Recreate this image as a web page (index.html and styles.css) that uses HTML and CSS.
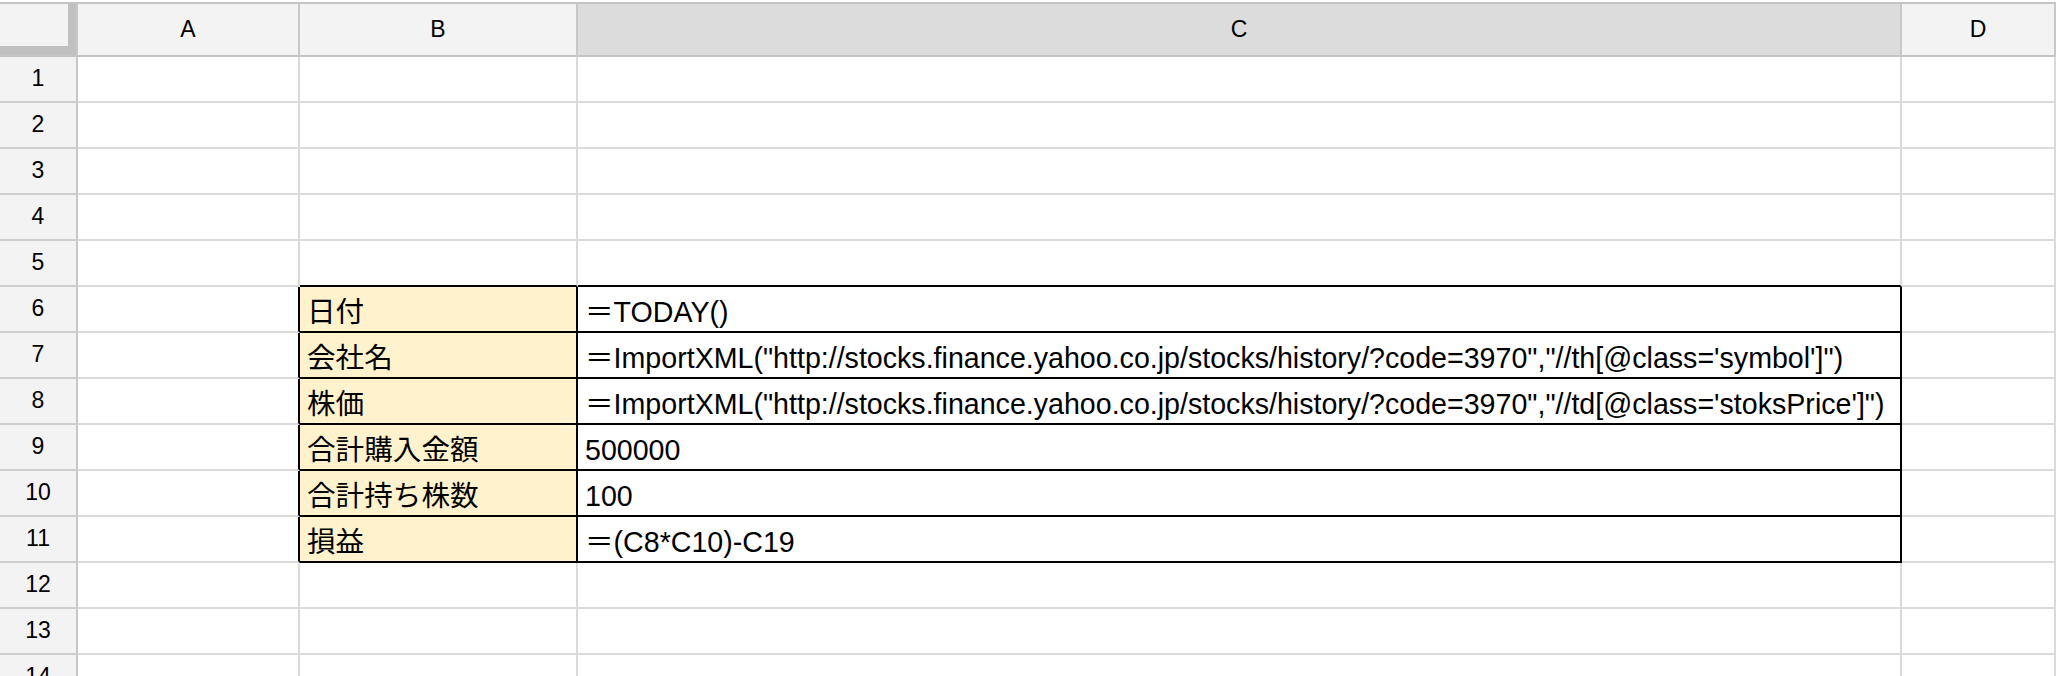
FILE: index.html
```html
<!DOCTYPE html>
<html lang="ja">
<head>
<meta charset="utf-8">
<title>Sheet</title>
<link rel="stylesheet" href="styles.css">
</head>
<body>
<div class="sheet">
  <div class="c h corner"></div>
  <div class="c h">A</div>
  <div class="c h">B</div>
  <div class="c h sel">C</div>
  <div class="c h">D</div>

  <div class="c rh">1</div><div class="c"></div><div class="c"></div><div class="c"></div><div class="c"></div>
  <div class="c rh">2</div><div class="c"></div><div class="c"></div><div class="c"></div><div class="c"></div>
  <div class="c rh">3</div><div class="c"></div><div class="c"></div><div class="c"></div><div class="c"></div>
  <div class="c rh">4</div><div class="c"></div><div class="c"></div><div class="c"></div><div class="c"></div>
  <div class="c rh">5</div><div class="c"></div><div class="c above"></div><div class="c above"></div><div class="c"></div>

  <div class="c rh">6</div><div class="c left"></div><div class="c t lab">日付</div><div class="c t val">＝TODAY()</div><div class="c"></div>
  <div class="c rh">7</div><div class="c left"></div><div class="c t lab">会社名</div><div class="c t val">＝ImportXML("http://stocks.finance.yahoo.co.jp/stocks/history/?code=3970","//th[@class='symbol']")</div><div class="c"></div>
  <div class="c rh">8</div><div class="c left"></div><div class="c t lab">株価</div><div class="c t val">＝ImportXML("http://stocks.finance.yahoo.co.jp/stocks/history/?code=3970","//td[@class='stoksPrice']")</div><div class="c"></div>
  <div class="c rh">9</div><div class="c left"></div><div class="c t lab">合計購入金額</div><div class="c t val">500000</div><div class="c"></div>
  <div class="c rh">10</div><div class="c left"></div><div class="c t lab">合計持ち株数</div><div class="c t val">100</div><div class="c"></div>
  <div class="c rh">11</div><div class="c left"></div><div class="c t lab">損益</div><div class="c t val">＝(C8*C10)-C19</div><div class="c"></div>

  <div class="c rh">12</div><div class="c"></div><div class="c"></div><div class="c"></div><div class="c"></div>
  <div class="c rh">13</div><div class="c"></div><div class="c"></div><div class="c"></div><div class="c"></div>
  <div class="c rh">14</div><div class="c"></div><div class="c"></div><div class="c"></div><div class="c"></div>
</div>
</body>
</html>
```
FILE: styles.css
```css
html, body {
  margin: 0;
  padding: 0;
  background: #ffffff;
  overflow: hidden;
}

body {
  padding-top: 2px;
  font-family: "Liberation Sans", Arial, "Noto Sans CJK JP", sans-serif;
  color: #000;
}

.sheet {
  display: grid;
  grid-template-columns: 78px 222px 278px 1324px 1fr;
  grid-template-rows: 55px;
  grid-auto-rows: 46px;
}

.c {
  box-sizing: border-box;
  border-right: 2px solid #dadada;
  border-bottom: 2px solid #dadada;
  height: 46px;
  overflow: hidden;
  white-space: nowrap;
}

.h {
  height: 55px;
  border-top: 2px solid #c4c4c4;
  border-right-color: #c8c8c8;
  border-bottom-color: #c4c4c4;
  background: #f3f3f3;
  font-size: 23px;
  line-height: 51px;
  text-align: center;
}

.sel {
  background: #dcdcdc;
}

.corner {
  box-shadow: inset -8px -9px 0 #c0c0c0;
}

.rh {
  background: #f3f3f3;
  border-right-color: #c8c8c8;
  border-bottom-color: #cdcdcd;
  font-size: 23px;
  line-height: 43px;
  text-align: center;
}

.above {
  border-bottom-color: #000;
}

.left {
  border-right-color: #000;
}

.t {
  border-right-color: #000;
  border-bottom-color: #000;
  font-size: 28.6px;
  line-height: 50px;
  padding-left: 7px;
}

.lab {
  background: #fff2cc;
}

.val {
  background: #ffffff;
}
```
